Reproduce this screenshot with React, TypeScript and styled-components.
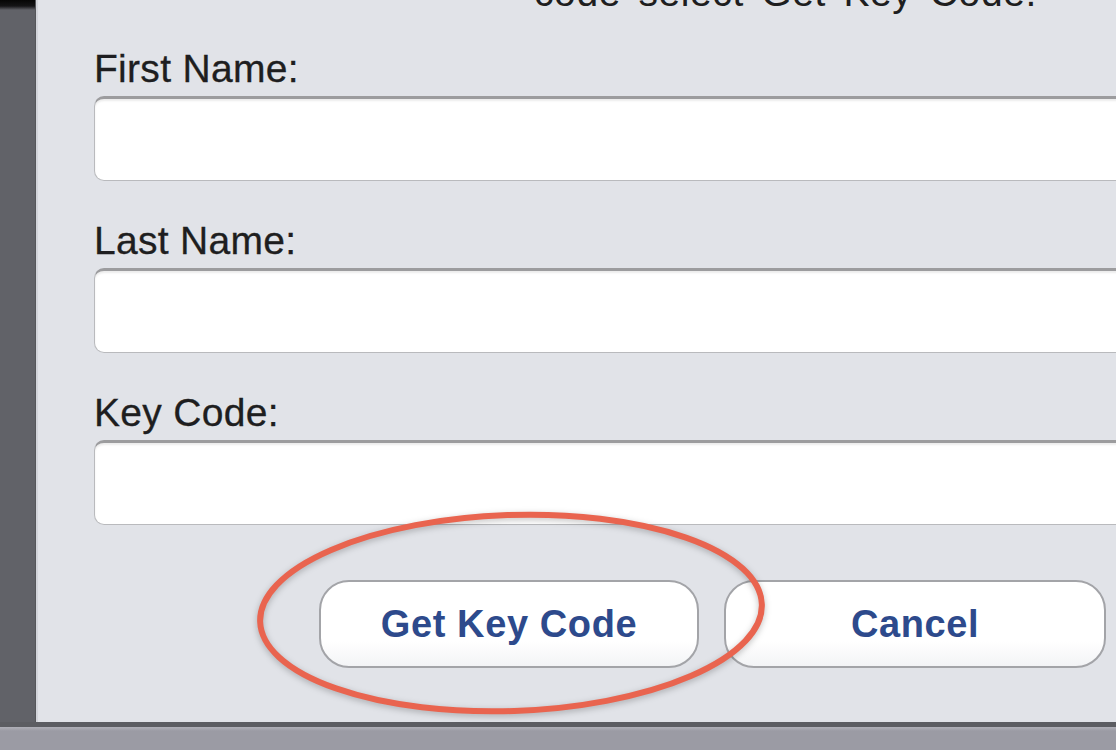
import styled, {createGlobalStyle} from 'styled-components';

const COLORS = {
  panel: '#e1e3e8',
  strip: '#616268',
  stripEdge: '#55565a',
  bottom: '#9b9ba4',
  label: '#1e1e20',
  buttonText: '#2d4a8c',
  ring: '#e9644f',
};

const GlobalStyle = createGlobalStyle`
  html, body {
    margin: 0;
    padding: 0;
    background: ${COLORS.bottom};
  }
  body {
    font-family: "Liberation Sans", Arial, sans-serif;
  }
`;

const Page = styled.div`
  position: relative;
  width: 1116px;
  height: 750px;
  display: flex;
  flex-direction: column;
  overflow: hidden;
`;

const Main = styled.div`
  display: flex;
  height: 722px;
`;

const LeftStrip = styled.div`
  position: relative;
  width: 35px;
  flex-shrink: 0;
  background: ${COLORS.strip};
  border-right: 1px solid ${COLORS.stripEdge};

  &::before {
    content: '';
    position: absolute;
    left: 0;
    top: 0;
    right: 0;
    height: 10px;
    background: linear-gradient(#050505 0%, #141416 60%, ${COLORS.strip} 100%);
  }
`;

const Panel = styled.div`
  flex: 1;
  min-width: 0;
  background: ${COLORS.panel};
  border-left: 2px solid #d2d4da;
  padding-left: 56px;
  overflow: hidden;
  display: flex;
  flex-direction: column;
`;

const Intro = styled.p`
  margin: -27px 0 0 0;
  padding-left: 440px;
  font-size: 39px;
  line-height: 40px;
  color: ${COLORS.label};
  white-space: nowrap;
  word-spacing: 6px;
  letter-spacing: 0.6px;
`;

const Field = styled.div`
  display: flex;
  flex-direction: column;
  margin-top: ${(p: {$first?: boolean}) => (p.$first ? '36px' : '40px')};
  margin-right: -30px;
`;

const Label = styled.label`
  font-size: 39px;
  line-height: 40px;
  color: ${COLORS.label};
  letter-spacing: 0.3px;
  -webkit-text-stroke: 0.3px ${COLORS.label};
`;

const Input = styled.input`
  margin-top: 7px;
  height: 85px;
  box-sizing: border-box;
  background: #ffffff;
  border: 1.5px solid #b9babd;
  border-top: 3px solid #9c9c9e;
  border-radius: 10px;
  box-shadow: inset 0 2px 2px rgba(0, 0, 0, 0.08);
  outline: none;
  font-size: 36px;
  font-family: inherit;
`;

const ButtonRow = styled.div`
  display: flex;
  align-items: center;
  gap: 25px;
  margin-top: 55px;
  padding-left: 225px;
`;

const Button = styled.button<{$width: number}>`
  width: ${(p) => p.$width}px;
  height: 88px;
  box-sizing: border-box;
  border-radius: 30px;
  border: 2px solid #a3a4a8;
  background: linear-gradient(#ffffff 0%, #ffffff 70%, #f3f4f6 100%);
  color: ${COLORS.buttonText};
  font-family: inherit;
  font-size: 38px;
  font-weight: bold;
  letter-spacing: 0.6px;
  padding: 0;
  cursor: pointer;
`;

const BottomBar = styled.div`
  flex: 1;
  border-top: 5px solid #5c5d62;
  background: linear-gradient(#b0b0b8 0px, ${COLORS.bottom} 4px);
`;

const Ring = styled.svg`
  position: absolute;
  left: 0;
  top: 0;
  pointer-events: none;
  filter: drop-shadow(0 2px 3px rgba(0, 0, 0, 0.25));
`;

export default function App() {
  return (
    <>
      <GlobalStyle />
      <Page>
        <Main>
          <LeftStrip />
          <Panel>
            <Intro>code select Get Key Code.</Intro>
            <Field $first>
              <Label>First Name:</Label>
              <Input type="text" />
            </Field>
            <Field>
              <Label>Last Name:</Label>
              <Input type="text" />
            </Field>
            <Field>
              <Label>Key Code:</Label>
              <Input type="text" />
            </Field>
            <ButtonRow>
              <Button $width={380}>Get Key Code</Button>
              <Button $width={382}>Cancel</Button>
            </ButtonRow>
          </Panel>
        </Main>
        <BottomBar />
        <Ring width="1116" height="750" viewBox="0 0 1116 750">
          <ellipse
            cx="511"
            cy="613"
            rx="251"
            ry="98"
            transform="rotate(-2 511 613)"
            fill="none"
            stroke={COLORS.ring}
            strokeWidth="6"
          />
        </Ring>
      </Page>
    </>
  );
}
